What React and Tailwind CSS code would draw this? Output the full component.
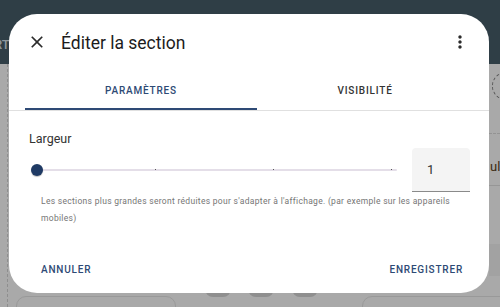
import React from "react";

const font = { fontFamily: "Roboto, 'Noto Sans', sans-serif" };

function CloseIcon() {
  return (
    <svg width="20" height="20" viewBox="0 0 24 24" fill="#2b2b2b">
      <path d="M19 6.41L17.59 5 12 10.59 6.41 5 5 6.41 10.59 12 5 17.59 6.41 19 12 13.41 17.59 19 19 17.59 13.41 12z" />
    </svg>
  );
}

function MoreIcon() {
  return (
    <svg width="20" height="20" viewBox="0 0 24 24" fill="#2b2b2b">
      <path d="M12 8c1.1 0 2-.9 2-2s-.9-2-2-2-2 .9-2 2 .9 2 2 2zm0 2c-1.1 0-2 .9-2 2s.9 2 2 2 2-.9 2-2-.9-2-2-2zm0 6c-1.1 0-2 .9-2 2s.9 2 2 2 2-.9 2-2-.9-2-2-2z" />
    </svg>
  );
}

function Slider() {
  const ticks = [0, 118, 236, 354];
  return (
    <div className="relative ml-[22px] h-[12px] w-[372px]">
      <div className="absolute left-[6px] right-[6px] top-[5px] h-[2px] rounded-full bg-[#e4dee8]" />
      {ticks.map((t) => (
        <div
          key={t}
          className="absolute top-[5px] h-[1px] w-[1px] bg-[#555]"
          style={{ left: 6 + t }}
        />
      ))}
      <div className="absolute left-0 top-0 h-[12px] w-[12px] rounded-full bg-[#1f3a64] shadow-[0_1px_1px_rgba(0,0,0,0.25)]" />
    </div>
  );
}

export default function App() {
  return (
    <div className="relative h-[307px] w-[500px] overflow-hidden bg-[#a9a9a9]" style={font}>
      {/* page behind the scrim */}
      <div className="flex h-[64px] items-end bg-[#2f3e46] pb-[10px]">
        <span className="-ml-[6px] text-[13px] font-medium text-[#8d979c]">RT</span>
      </div>
      <div className="absolute left-[7px] top-[64px] bottom-0 border-l border-dashed border-[#8e8e8e]" />
      <div className="absolute left-[492px] top-[72px] h-[28px] w-[28px] rounded-full border border-dashed border-[#555]" />
      <div className="absolute left-[489px] right-0 top-[133px] border-t border-dashed border-[#939393]" />
      <div className="absolute left-[490px] top-[157px] text-[13px] text-[#3a2a10]">ul</div>
      <div className="absolute left-[489px] right-0 top-[185px] border-t border-[#969696]" />
      <div className="absolute left-[489px] right-0 top-[244px] h-[32px] bg-[#a2a2a2]" />
      <div className="absolute left-[16px] top-[296px] h-[20px] w-[160px] rounded-t-[10px] border border-[#999]" />
      <div className="absolute left-[205px] top-[289px] h-[8px] w-[26px] rounded-b-full bg-[#8f8f8f]" />
      <div className="absolute left-[248px] top-[289px] h-[8px] w-[26px] rounded-b-full bg-[#8f8f8f]" />
      <div className="absolute left-[292px] top-[289px] h-[8px] w-[26px] rounded-b-full bg-[#8f8f8f]" />
      <div className="absolute left-[362px] top-[296px] h-[20px] w-[140px] rounded-tl-[10px] border border-[#999]" />

      {/* dialog */}
      <div className="absolute left-[9px] top-[14px] flex h-[279px] w-[480px] flex-col rounded-[28px] bg-white">
        <div className="flex h-[56px] items-center pl-[18px] pr-[19px]">
          <CloseIcon />
          <h2 className="ml-[14px] mt-[2px] text-[17.5px] font-normal text-[#1c1c1c]">Éditer la section</h2>
          <div className="ml-auto">
            <MoreIcon />
          </div>
        </div>

        <div className="border-b border-[#e0e0e0] px-[16px]">
          <div className="flex h-[40px]">
            <div className="relative flex w-[232px] items-center justify-center">
              <span className="text-[10px] font-medium tracking-[0.8px] text-[#2e4a75]">PARAMÈTRES</span>
              <div className="absolute bottom-0 left-0 right-0 h-[2px] bg-[#2e4a75]" />
            </div>
            <div className="flex flex-1 items-center justify-center">
              <span className="text-[10px] font-medium tracking-[0.8px] text-[#333]">VISIBILITÉ</span>
            </div>
          </div>
        </div>

        <div className="pt-[20px]">
          <div className="ml-[20px] text-[12.5px] leading-[16px] text-[#333]">Largeur</div>
          <div className="mt-[1px] flex h-[44px] items-center">
            <Slider />
            <div className="ml-[9px] flex h-[44px] w-[58px] items-center rounded-t-[4px] border-b border-[#8a8a8a] bg-[#f4f4f4] pl-[15px] text-[13px] text-[#333]">
              1
            </div>
          </div>
          <p className="ml-[32px] mr-[30px] mt-[1px] text-[8.5px] leading-[17px] tracking-[0.3px] text-[#757575]">
            Les sections plus grandes seront réduites pour s'adapter à l'affichage. (par exemple sur les appareils mobiles)
          </p>
        </div>

        <div className="mb-[6px] mt-auto flex h-[36px] items-center justify-between pl-[32px] pr-[26px]">
          <span className="text-[10px] font-medium tracking-[0.8px] text-[#2e4a75]">ANNULER</span>
          <span className="text-[10px] font-medium tracking-[0.8px] text-[#2e4a75]">ENREGISTRER</span>
        </div>
      </div>
    </div>
  );
}
